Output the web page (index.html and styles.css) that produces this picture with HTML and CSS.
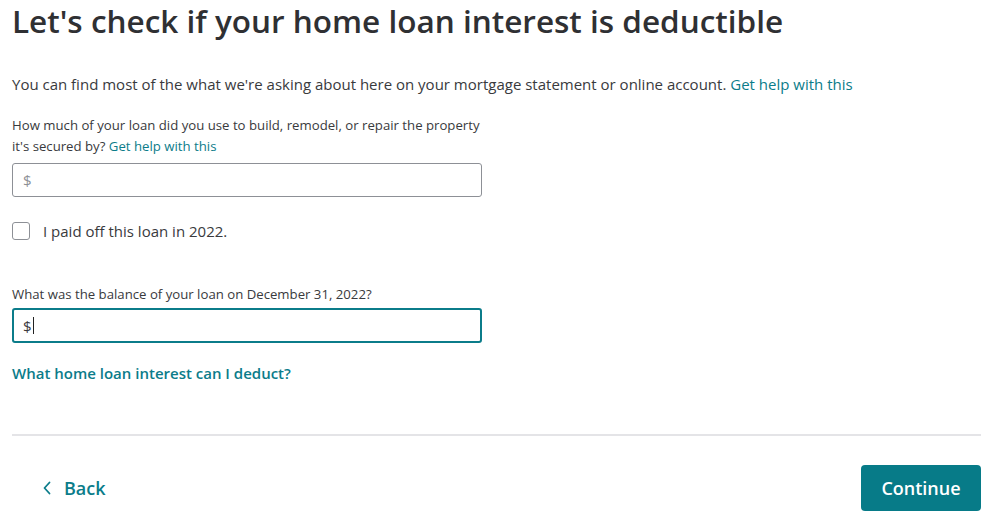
FILE: index.html
```html
<!DOCTYPE html>
<html lang="en">
<head>
    <meta charset="UTF-8">
    <meta name="viewport" content="width=device-width, initial-scale=1.0">
    <title>Home loan interest</title>
    <link rel="stylesheet" href="styles.css">
</head>
<body>

    <div class="page">
        <h1>Let's check if your home loan interest is deductible</h1>

        <p class="intro">You can find most of the what we're asking about here on your mortgage statement or online account. <a href="#">Get help with this</a></p>

        <div class="field">
            <label for="improveAmount">How much of your loan did you use to build, remodel, or repair the property it's secured by? <a href="#">Get help with this</a></label>
            <input type="text" id="improveAmount" placeholder="$">
        </div>

        <label class="check">
            <span class="box"></span>
            <span>I paid off this loan in 2022.</span>
        </label>

        <div class="field balance">
            <label for="balance">What was the balance of your loan on December 31, 2022?</label>
            <div class="input focused">$<span class="caret"></span></div>
        </div>

        <a class="learn" href="#">What home loan interest can I deduct?</a>

        <div class="footer">
            <a class="back" href="#">
                <svg width="8" height="14" viewBox="0 0 8 14"><path d="M6.5 1.5 1.5 7l5 5.5" fill="none" stroke="currentColor" stroke-width="1.8" stroke-linecap="round" stroke-linejoin="round"/></svg>
                Back
            </a>
            <button class="continue">Continue</button>
        </div>
    </div>

</body>
</html>
```

FILE: styles.css
```css
body {
    font-family: "Open Sans", Lato, Arial, sans-serif;
    color: #393a3d;
    background-color: #fff;
    margin: 0;
}
a {
    color: #0b7c8a;
    text-decoration: none;
}
.page {
    padding: 0 18px 0 12px;
}
h1 {
    font-size: 31.5px;
    font-weight: 600;
    margin: 0;
    line-height: 42px;
    color: #2f3033;
}
.intro {
    font-size: 15px;
    margin: 32px 0 0;
    line-height: 20px;
}
.field {
    width: 470px;
    margin-top: 21px;
}
.field label {
    display: block;
    width: 482px;
    font-size: 13.2px;
    line-height: 21px;
    margin-bottom: 6px;
}
input[type="text"],
.input {
    display: block;
    width: 100%;
    height: 34px;
    padding: 0 10px;
    border: 1px solid #8d9096;
    border-radius: 3px;
    font-family: inherit;
    font-size: 15px;
    color: #393a3d;
    box-sizing: border-box;
}
input::placeholder {
    color: #8d9096;
}
.input.focused {
    height: 35px;
    border: 2px solid #0b7c8a;
    display: flex;
    align-items: center;
    padding: 0 9px;
}
.caret {
    display: inline-block;
    width: 1px;
    height: 17px;
    background-color: #222;
    margin-left: 1px;
}
.check {
    display: flex;
    align-items: center;
    gap: 13px;
    margin-top: 24px;
    font-size: 15px;
    line-height: 20px;
}
.box {
    width: 18px;
    height: 18px;
    border: 1px solid #8d9096;
    border-radius: 3px;
    box-sizing: border-box;
}
.balance {
    margin-top: 43px;
}
.balance label {
    margin-bottom: 3px;
}
.learn {
    display: inline-block;
    margin-top: 20px;
    font-size: 15px;
    font-weight: 600;
    line-height: 20px;
}
.footer {
    margin-top: 50px;
    border-top: 2px solid #e4e4e7;
    display: flex;
    justify-content: space-between;
    align-items: center;
    padding: 29px 0 0 31px;
}
.back {
    display: flex;
    align-items: center;
    gap: 13px;
    font-size: 18px;
    font-weight: 600;
}
.continue {
    width: 120px;
    height: 46px;
    border: none;
    border-radius: 4px;
    background-color: #077b88;
    color: #fff;
    font-family: inherit;
    font-size: 18px;
    font-weight: 600;
    cursor: pointer;
}
```
